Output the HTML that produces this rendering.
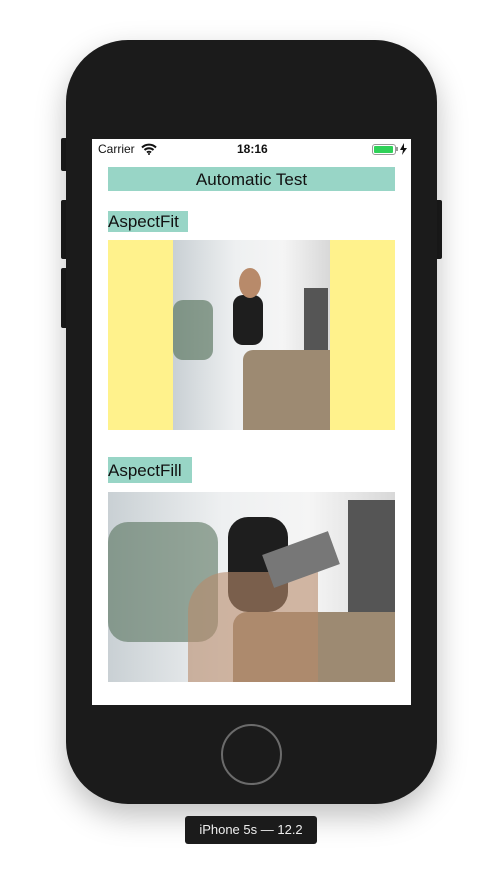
<!DOCTYPE html>
<html><head><style>
body{margin:0;width:503px;height:880px;background:#fff;position:relative;overflow:hidden;font-family:"Liberation Sans",sans-serif}
.a{position:absolute}
</style></head><body>
<div class="a" style="left:61px;top:138px;width:8px;height:33px;background:#1b1b1b;border-radius:2px"></div>
<div class="a" style="left:61px;top:200px;width:8px;height:59px;background:#1b1b1b;border-radius:2px"></div>
<div class="a" style="left:61px;top:268px;width:8px;height:60px;background:#1b1b1b;border-radius:2px"></div>
<div class="a" style="left:434px;top:200px;width:8px;height:59px;background:#1b1b1b;border-radius:2px"></div>
<div class="a" style="left:66px;top:40px;width:371px;height:764px;background:#1b1b1b;border-radius:62px;box-shadow:0 12px 30px rgba(0,0,0,.25)"></div>
<div class="a" style="left:92px;top:139px;width:319px;height:566px;background:#fff"></div>
<div class="a" style="left:98px;top:142px;font-size:12px;color:#111">Carrier</div>
<svg class="a" style="left:141px;top:143px" width="16" height="12" viewBox="0 0 16 12"><path d="M1 4.5a10 10 0 0 1 14 0M3.5 7a6.5 6.5 0 0 1 9 0M6 9.5a3 3 0 0 1 4 0" stroke="#111" stroke-width="2" fill="none"/><circle cx="8" cy="11" r="1" fill="#111"/></svg>
<div class="a" style="left:237px;top:142px;font-size:12px;font-weight:bold;color:#111">18:16</div>
<div class="a" style="left:372px;top:144px;width:22px;height:9px;border:1px solid #999;border-radius:3px"></div>
<div class="a" style="left:374px;top:146px;width:19px;height:7px;background:#2fd158;border-radius:1px"></div>
<div class="a" style="left:396px;top:147px;width:1.5px;height:4px;background:#999"></div>
<svg class="a" style="left:400px;top:143px" width="7" height="12" viewBox="0 0 7 12"><path d="M4 0L0 7h3l-1 5 5-7H4z" fill="#111"/></svg>
<div class="a" style="left:108px;top:167px;width:287px;height:24px;background:#98d5c6;text-align:center;font-size:17px;line-height:25px;color:#111">Automatic Test</div>
<div class="a" style="left:108px;top:211px;width:80px;height:21px;background:#98d5c6;font-size:17px;line-height:22px;color:#111">AspectFit</div>
<div class="a" style="left:108px;top:240px;width:287px;height:190px;background:#fff28c"></div>
<div class="a" style="left:173px;top:240px;width:157px;height:190px;background:linear-gradient(90deg,#c9d0d4,#eef0f1 40%,#f5f5f5 70%,#d8d8d8);overflow:hidden">
 <div class="a" style="left:0;top:60px;width:40px;height:60px;background:#4d6a52;opacity:.6;border-radius:10px"></div>
 <div class="a" style="left:131px;top:48px;width:24px;height:62px;background:#555"></div>
 <div class="a" style="left:70px;top:110px;width:90px;height:80px;background:#9d8a72;border-radius:10px 0 0 0"></div>
 <div class="a" style="left:60px;top:55px;width:30px;height:50px;background:#1e1e1e;border-radius:10px"></div>
 <div class="a" style="left:66px;top:28px;width:22px;height:30px;background:#b88a6a;border-radius:50%"></div>
</div>
<div class="a" style="left:108px;top:457px;width:84px;height:26px;background:#98d5c6;font-size:17px;line-height:27px;color:#111">AspectFill</div>
<div class="a" style="left:108px;top:492px;width:287px;height:190px;background:linear-gradient(90deg,#c9d0d4,#eef0f1 40%,#f5f5f5 70%,#d8d8d8);overflow:hidden">
 <div class="a" style="left:0;top:30px;width:110px;height:120px;background:#4d6a52;opacity:.55;border-radius:20px"></div>
 <div class="a" style="left:240px;top:8px;width:47px;height:120px;background:#555"></div>
 <div class="a" style="left:125px;top:120px;width:162px;height:70px;background:#9d8a72;border-radius:14px 0 0 0"></div>
 <div class="a" style="left:120px;top:25px;width:60px;height:95px;background:#1e1e1e;border-radius:20px"></div>
 <div class="a" style="left:80px;top:80px;width:130px;height:110px;background:#b88a6a;opacity:.6;border-radius:40px 0 0 0"></div>
 <div class="a" style="left:158px;top:50px;width:70px;height:35px;background:#777;transform:rotate(-20deg)"></div>
</div>
<div class="a" style="left:221px;top:724px;width:57px;height:57px;border:2px solid #6b6b6b;border-radius:50%"></div>
<div class="a" style="left:185px;top:816px;width:132px;height:28px;background:#1b1b1b;border-radius:3px;color:#eee;font-size:13px;line-height:28px;text-align:center">iPhone 5s — 12.2</div>
</body></html>
